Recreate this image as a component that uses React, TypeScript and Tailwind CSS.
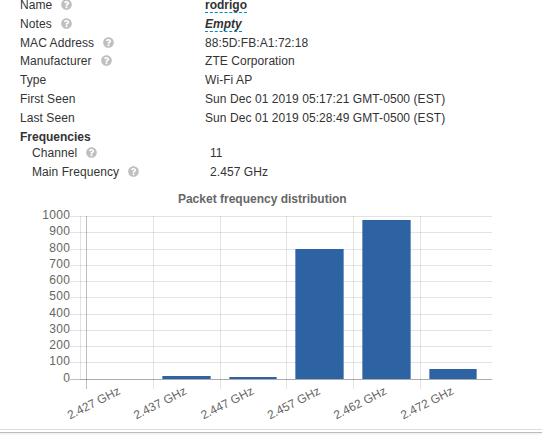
import { FaQuestionCircle } from "react-icons/fa";

type Row = { label: string; value: string; help?: boolean; style?: string; height: string };

const rows: Row[] = [
  { label: "Name", value: "rodrigo", help: true, style: "font-bold tracking-normal", height: "h-[19px]" },
  { label: "Notes", value: "Empty", help: true, style: "font-bold italic tracking-normal", height: "h-[19px]" },
  { label: "MAC Address", value: "88:5D:FB:A1:72:18", help: true, height: "h-[18px]" },
  { label: "Manufacturer", value: "ZTE Corporation", help: true, height: "h-[19px]" },
  { label: "Type", value: "Wi-Fi AP", height: "h-[19px]" },
  { label: "First Seen", value: "Sun Dec 01 2019 05:17:21 GMT-0500 (EST)", height: "h-[19px]" },
  { label: "Last Seen", value: "Sun Dec 01 2019 05:28:49 GMT-0500 (EST)", height: "h-[19px]" },
];

const channelRows: Row[] = [
  { label: "Channel", value: "11", help: true, height: "h-[19px]" },
  { label: "Main Frequency", value: "2.457 GHz", help: true, height: "h-[19px]" },
];

const yTicks = [
  { label: "1000", y: 216 },
  { label: "900", y: 232 },
  { label: "800", y: 249 },
  { label: "700", y: 265 },
  { label: "600", y: 281 },
  { label: "500", y: 297 },
  { label: "400", y: 314 },
  { label: "300", y: 330 },
  { label: "200", y: 346 },
  { label: "100", y: 362 },
  { label: "0", y: 379 },
];

const columns = [
  { label: "2.427 GHz", x: 86, end: 121, bar: 0, width: 0, top: 379 },
  { label: "2.437 GHz", x: 153, end: 187.3, bar: 162, width: 49, top: 376 },
  { label: "2.447 GHz", x: 220, end: 254.5, bar: 229, width: 48, top: 377 },
  { label: "2.457 GHz", x: 286, end: 321, bar: 295, width: 49, top: 249 },
  { label: "2.462 GHz", x: 353, end: 387.3, bar: 362, width: 49, top: 220 },
  { label: "2.472 GHz", x: 420, end: 454.3, bar: 429, width: 48, top: 369 },
];

function Detail({ row, labelWidth }: { row: Row; labelWidth: string }) {
  return (
    <div className={`flex items-start tracking-[0.07px] ${row.height}`}>
      <div className={`flex shrink-0 items-center leading-[14px] ${labelWidth}`}>
        {row.label}
        {row.help && <FaQuestionCircle className="-mt-px ml-[9px] size-[11px] text-[#bfbfbf]" />}
      </div>
      <div
        className={
          row.style
            ? `h-[15px] border-b border-dashed border-[#0088cc] leading-[14px] ${row.style}`
            : "leading-[14px]"
        }
      >
        {row.value}
      </div>
    </div>
  );
}

function Chart() {
  return (
    <svg className="block h-[239px] w-[542px] shrink-0" viewBox="0 190 542 239" fontSize="12" fill="#666">
      <text x="262.3" y="203" textAnchor="middle" fontWeight="bold">
        Packet frequency distribution
      </text>
      <g shapeRendering="crispEdges">
        {yTicks.map((t) => (
          <rect key={t.label} x="70" y={t.y} width="422" height="1" fill="#000" fillOpacity={t.y === 379 ? 0.25 : 0.11} />
        ))}
        <rect x="80" y="216" width="1" height="163" fill="#000" fillOpacity="0.11" />
        {columns.map((c) => (
          <rect key={c.label} x={c.x} y="216" width="1" height="173" fill="#000" fillOpacity={c.x === 86 ? 0.25 : 0.11} />
        ))}
        {columns.map((c) => (
          <g key={c.label} fill="#2d62a3">
            <rect x={c.bar} y={c.top} width={c.width} height={379 - c.top} fillOpacity="0.65" />
            {c.width > 0 && <rect x={c.bar + 1} y={c.top} width={c.width - 2} height={379 - c.top} />}
          </g>
        ))}
        <rect x="80" y="379" width="412" height="1" fill="#000" fillOpacity="0.1" />
      </g>
      {yTicks.map((t) => (
        <text key={t.label} x="70.2" y={t.y + 3} textAnchor="end" letterSpacing="0.3">
          {t.label}
        </text>
      ))}
      {columns.map((c) => (
        <text key={c.label} textAnchor="end" transform={`translate(${c.end} 393.5) rotate(-27)`}>
          {c.label}
        </text>
      ))}
    </svg>
  );
}

export default function App() {
  return (
    <div className="flex h-[435px] w-[542px] flex-col overflow-hidden bg-white font-['Liberation_Sans',Arial,sans-serif] text-[12px] text-[#333]">
      <div className="-mt-[2px] h-[192px] shrink-0 pl-5">
        {rows.map((row) => (
          <Detail key={row.label} row={row} labelWidth="w-[185px]" />
        ))}
        <div className="h-[16px] leading-[14px] font-bold">Frequencies</div>
        <div className="pl-3">
          {channelRows.map((row) => (
            <Detail key={row.label} row={row} labelWidth="w-[178px]" />
          ))}
        </div>
      </div>
      <Chart />
      <div className="h-[4px] shrink-0 border-y border-t-[#ddd] border-b-[#bbb] bg-white" />
      <div className="grow bg-[#f4f4f4]" />
    </div>
  );
}
